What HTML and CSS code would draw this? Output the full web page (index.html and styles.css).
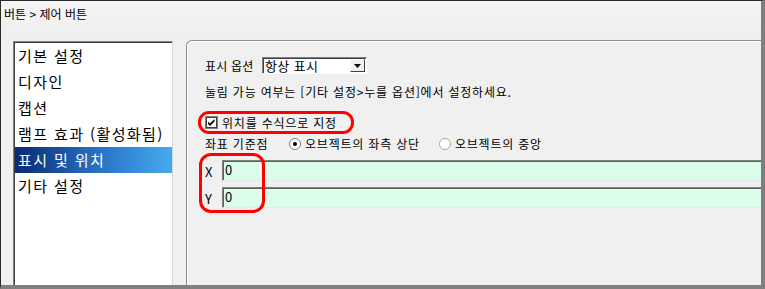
FILE: index.html
```html
<!DOCTYPE html>
<html lang="ko">
  <head>
    <meta charset="UTF-8" />
    <title>버튼 &gt; 제어 버튼</title>
    <link rel="stylesheet" href="styles.css">
  </head>
  <body>
    <div class="window">
      <div class="titlebar">버튼 &gt; 제어 버튼</div>

      <div class="content">
        <ul class="menu">
          <li>기본 설정</li>
          <li>디자인</li>
          <li>캡션</li>
          <li>램프 효과 (활성화됨)</li>
          <li class="active">표시 및 위치</li>
          <li>기타 설정</li>
        </ul>

        <div class="group">
          <div class="group-body">
            <div class="row-option">
              <span class="label-option">표시 옵션</span>
              <div class="combo">
                <span class="combo-text">항상 표시</span>
                <span class="combo-btn">
                  <svg width="7" height="4" viewBox="0 0 7 4"><path d="M0 0h7L3.5 4z" fill="#000"/></svg>
                </span>
              </div>
            </div>

            <div class="hint">눌림 가능 여부는 [기타 설정&gt;누를 옵션]에서 설정하세요.</div>

            <div class="check-row">
              <svg class="checkbox" width="13" height="13" viewBox="0 0 13 13">
                <rect x="0.5" y="0.5" width="12" height="12" fill="#fff" stroke="#808080"/>
                <rect x="1.5" y="1.5" width="10" height="10" fill="#fff" stroke="#404040"/>
                <path d="M3 5.5l2 2 4.5-4.5v2.5L5 10 3 8z" fill="#000"/>
              </svg>
              <span>위치를 수식으로 지정</span>
            </div>

            <div class="coord-row">
              <span class="label-coord">좌표 기준점</span>
              <label class="radio">
                <svg width="12" height="12" viewBox="0 0 12 12">
                  <circle cx="6" cy="6" r="5.5" fill="#fff" stroke="#808080"/>
                  <circle cx="6" cy="6" r="2" fill="#000"/>
                </svg>
                <span>오브젝트의 좌측 상단</span>
              </label>
              <label class="radio">
                <svg width="12" height="12" viewBox="0 0 12 12">
                  <circle cx="6" cy="6" r="5.5" fill="#fff" stroke="#a8a8a8"/>
                </svg>
                <span>오브젝트의 중앙</span>
              </label>
            </div>

            <div class="xy-block">
              <div class="xy-row">
                <span class="xy-label">X</span>
                <div class="xy-input">0</div>
              </div>
              <div class="xy-row">
                <span class="xy-label">Y</span>
                <div class="xy-input">0</div>
              </div>
              <div class="mark"></div>
            </div>
          </div>
        </div>
      </div>
    </div>
  </body>
</html>
```

FILE: styles.css
```css
body {
  margin: 0;
  font-family: "Noto Sans CJK KR", "Noto Sans", sans-serif;
  font-size: 12px;
  color: #000;
  background-color: #f0f0f0;
}

.window {
  width: 765px;
  height: 289px;
  box-sizing: border-box;
  display: flex;
  flex-direction: column;
  border-top: 1px solid #2a2a2a;
  border-left: 1px solid #2a2a2a;
  border-right: 4px solid #7f7f7f;
  border-bottom: 4px solid #7f7f7f;
  background-color: #f0f0f0;
  overflow: hidden;
}

.titlebar {
  height: 39px;
  flex-shrink: 0;
  box-sizing: border-box;
  padding: 4px 0 0 3px;
  line-height: 18px;
  background: linear-gradient(#f5f5f5, #eeeeee);
}

.content {
  flex: 1;
  display: flex;
  padding-left: 12px;
  min-height: 0;
}

.menu {
  width: 160px;
  margin: 1px 0 0 0;
  padding: 0;
  list-style: none;
  box-sizing: border-box;
  background-color: #ffffff;
  border-top: 1px solid #808080;
  border-left: 1px solid #808080;
  border-right: 1px solid #d8d8d8;
  box-shadow: inset 1px 1px #404040;
}

.menu li {
  height: 26px;
  line-height: 26px;
  padding-left: 3px;
  margin-left: 1px;
  font-size: 15px;
  letter-spacing: 1.4px;
  white-space: nowrap;
}

.menu li:first-child {
  margin-top: 1px;
}

.menu li.active {
  color: #ffffff;
  background: linear-gradient(to right, #0a2a72, #2a74c8 55%, #45aaef);
}

.group {
  flex: 1;
  margin-left: 13px;
  border-top: 1px solid #8e8e8e;
  border-left: 1px solid #8e8e8e;
  border-radius: 6px 0 0 0;
  box-shadow: inset 1px 1px #ffffff;
}

.group-body {
  padding: 16px 0 0 18px;
  display: flex;
  flex-direction: column;
  letter-spacing: 0.8px;
}

.row-option {
  display: flex;
  align-items: center;
  height: 17px;
}

.label-option {
  width: 57px;
  line-height: 17px;
  letter-spacing: 0.2px;
}

.combo {
  width: 105px;
  height: 17px;
  box-sizing: border-box;
  display: flex;
  align-items: center;
  justify-content: space-between;
  background-color: #ffffff;
  border: 1px solid;
  border-color: #808080 #ffffff #ffffff #808080;
  box-shadow: inset 1px 1px #404040;
  padding: 0 1px 0 2px;
}

.combo-text {
  font-size: 13px;
  line-height: 15px;
  letter-spacing: 0.4px;
}

.combo-btn {
  width: 15px;
  height: 13px;
  box-sizing: border-box;
  display: flex;
  align-items: center;
  justify-content: center;
  background-color: #f0f0f0;
  border: 1px solid;
  border-color: #ffffff #404040 #404040 #ffffff;
}

.hint {
  margin-top: 10px;
  height: 16px;
  line-height: 16px;
  white-space: nowrap;
}

.check-row {
  margin-top: 11px;
  margin-left: -7px;
  width: 156px;
  height: 23px;
  box-sizing: border-box;
  display: flex;
  align-items: center;
  gap: 4px;
  padding-left: 4px;
  border: 3px solid #ff0000;
  border-radius: 11px;
  line-height: 16px;
  white-space: nowrap;
}

.checkbox {
  flex-shrink: 0;
}

.coord-row {
  margin-top: 2px;
  height: 16px;
  display: flex;
  align-items: center;
  line-height: 16px;
  white-space: nowrap;
}

.label-coord {
  width: 84px;
}

.radio {
  display: flex;
  align-items: center;
  gap: 4px;
  margin-right: 19px;
}

.xy-block {
  position: relative;
  margin-top: 8px;
  display: flex;
  flex-direction: column;
  gap: 6px;
}

.xy-row {
  display: flex;
  align-items: center;
  height: 21px;
}

.xy-label {
  width: 17px;
  font-size: 13px;
  line-height: 16px;
  padding-top: 2px;
}

.xy-input {
  flex: 1;
  height: 21px;
  box-sizing: border-box;
  padding: 0 0 0 2px;
  font-size: 13px;
  line-height: 17px;
  background-color: #dbfde9;
  border-top: 1px solid #808080;
  border-left: 1px solid #808080;
  border-bottom: 1px solid #e8e8e8;
  box-shadow: inset 1px 1px #606060;
}

/* red annotation over the X / Y fields */
.mark {
  position: absolute;
  left: -6px;
  top: -7px;
  width: 66px;
  height: 60px;
  box-sizing: border-box;
  border: 3px solid #ff0000;
  border-radius: 12px;
}
```
